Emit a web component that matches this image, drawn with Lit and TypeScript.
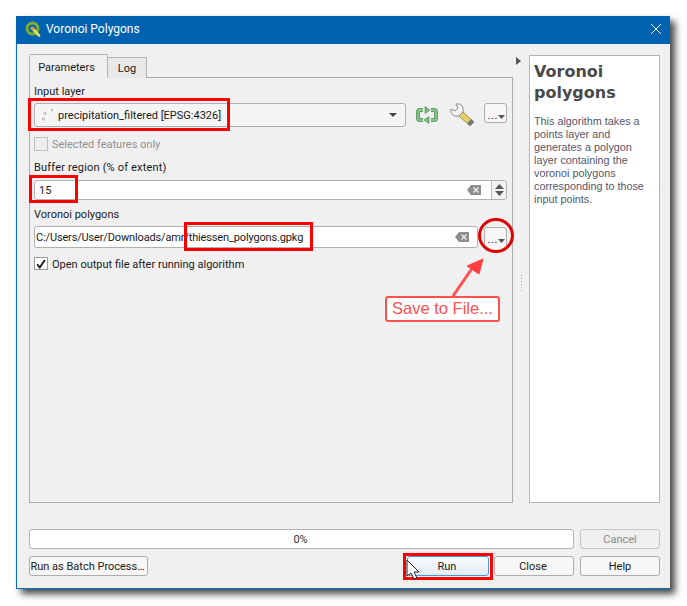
import { LitElement, html, css } from "lit";
import { customElement } from "lit/decorators.js";

const dots = html`<span class="dotsbtn-glyph"><i>...</i><svg width="7" height="4" viewBox="0 0 7 4"><path d="M0 0h7L3.500 4z" fill="#555"/></svg></span>`;
const clear = html`<svg class="clear" width="14" height="10" viewBox="0 0 14 10"><path d="M4 0h10v10H4L0 5z" fill="#8e8e8e"/><path d="M6.500 2.500l5 5M11.500 2.500l-5 5" stroke="#eee" stroke-width="1.400"/></svg>`;

@customElement("app-root")
export class AppRoot extends LitElement {
  static styles = css`
    :host { display: block; position: relative; width: 687px; height: 606px; background: #fff; overflow: hidden;
      font-family: Roboto, "Noto Sans", sans-serif; font-size: 11px; color: #1a1a1a; white-space: nowrap; }
    * { box-sizing: border-box; }
    .page { padding: 16px 17px 17px 16px; height: 100%; }
    .win { width: 654px; height: 573px; display: flex; flex-direction: column; background: #f0f0f0;
      border: 1px solid #0a6cbc; border-top: 0; border-right: 0; box-shadow: 5px 5px 7px rgba(0,0,0,.72); }
    .title { height: 28px; flex: none; margin-left: -1px; background: #0063b1; color: #fff; display: flex; align-items: center;
      padding: 0 8px 2px 9px; gap: 5px; font-size: 12px; }
    .title .t { flex: 1; }
    .body { flex: 1; display: flex; flex-direction: column; padding: 11px 10px 12px 12px; }
    .top { display: flex; height: 448px; flex: none; }
    .left { width: 484px; display: flex; flex-direction: column; }
    .tabs { display: flex; align-items: flex-end; height: 23px; flex: none; position: relative; z-index: 1; margin-bottom: -1px; }
    .tab { border: 1px solid #b4b4b4; border-bottom: 0; border-radius: 2px 2px 0 0; display: flex; align-items: center; justify-content: center; }
    .tab.on { width: 79px; height: 24px; background: #f0f0f0; padding: 2px 4px 0 0; }
    .tab.off { width: 40px; height: 21px; margin-left: -1px; background: #e8e8e8; padding-top: 1px; }
    .panel { flex: 1; border: 1px solid #ababab; padding: 4px 5px 0 4px; display: flex; flex-direction: column; }
    .lab { height: 16px; line-height: 18px; }
    .lab.l1 { margin-top: 1px; }
    .lab.buf { letter-spacing: .18px; }
    .row { display: flex; align-items: flex-start; }
    .combo { width: 372px; height: 24px; background: #f5f5f5; border: 1px solid #b0b0b0; border-radius: 3px; display: flex; align-items: center; padding: 0 8px 0 6px; margin-top: 4px; }
    .combo .pts { margin-right: 5px; flex: none; }
    .combo .name { flex: 1; padding-top: 1px; }
    .ic { display: flex; align-items: center; justify-content: center; flex: none; margin-top: 4px; }
    .ic1 { width: 34px; margin-left: 4px; height: 24px; }
    .ic2 { width: 36px; height: 24px; }
    .dotsbtn { width: 23px; height: 20px; border: 1px solid #adadad; border-radius: 3px; background: #f6f6f6; flex: none; margin: 4px 0 0 4px; position: relative; }
    .dotsbtn-glyph { position: absolute; right: 1px; top: 8px; display: flex; align-items: flex-end; color: #222; }
    .dotsbtn-glyph i { font-style: normal; font-size: 11px; line-height: 7px; letter-spacing: .6px; }
    .check { display: flex; align-items: center; gap: 4px; height: 14px; line-height: 16px; }
    .check .tx { padding-top: 2px; }
    .box { width: 14px; height: 14px; border: 1px solid #999; background: #fff; display: flex; align-items: center; justify-content: center; flex: none; }
    .check.dis { color: #909090; margin-top: 10px; }
    .check.dis .box { background: #eee; border-color: #c0c0c0; }
    .check.en { margin-top: 9px; height: 13px; }
    .check.en .box { height: 13px; }
    .buf { margin-top: 8px; }
    .spin { height: 20px; width: 473px; background: #fff; border: 1px solid #b0b0b0; border-radius: 3px; display: flex; align-items: center; padding-left: 4px; margin-top: 5px; }
    .spin .v { flex: 1; }
    .spin .clear { margin-right: 10px; }
    .arrows { width: 15px; height: 100%; border-left: 1px solid #b8b8b8; display: flex; flex-direction: column; align-items: center; justify-content: center; gap: 2px; background: #f2f2f2; border-radius: 0 3px 3px 0; }
    .vor { margin-top: 6px; }
    .out { width: 444px; height: 22px; background: #fff; border: 1px solid #b0b0b0; border-radius: 3px; display: flex; align-items: center; padding-left: 1px; }
    .out .v { flex: 1; letter-spacing: -.15px; }
    .out .clear { margin-right: 8px; }
    .outrow { margin-top: 4px; gap: 6px; height: 22px; }
    .outrow .dotsbtn { margin: 1px 0 0 0; height: 24px; }
    .split { width: 16px; flex: none; position: relative; }
    .arrow-r { position: absolute; left: 3px; top: 2px; }
    .grip { position: absolute; left: 8px; top: 220px; width: 1px; height: 16px; background-image: linear-gradient(#aaa 1px, transparent 1px); background-size: 1px 3px; }
    .help { width: 131px; flex: none; background: #fff; border: 1px solid #b4b4b4; padding: 5px 4px 0 4px; color: #55556a; font-family: "Liberation Sans", sans-serif; font-size: 10.800px; line-height: 13px; white-space: normal; }
    .help h3 { margin: 0 0 12px; font-size: 16px; line-height: 21px; color: #4a4a4a; font-weight: 700; font-family: "DejaVu Sans", sans-serif; }
    .help p { margin: 0; }
    .prog { display: flex; gap: 6px; margin-top: 26px; height: 20px; flex: none; }
    .bar { flex: 1; background: #fff; border: 1px solid #b4b4b4; border-radius: 3px; display: flex; align-items: center; justify-content: center; color: #333; padding-right: 2px; }
    .btn { width: 80px; height: 20px; border: 1px solid #adadad; border-radius: 3px; background: #f7f7f7; display: flex; align-items: center; justify-content: center; flex: none; padding-right: 2px; }
    .btn.dis { color: #8a8a8a; background: #efefef; border-color: #c4c4c4; padding-right: 0; }
    .btn.batch { width: 119px; }
    .btn.run { width: 82px; border-color: #3f9ae0; background: linear-gradient(#fbfcfe, #e2ebf3); }
    .btns { display: flex; margin-top: 7px; height: 20px; flex: none; gap: 5px; }
    .sp { flex: 1; }
    .btns .btn.help-b { margin-left: 1px; padding-right: 0; }
    .rect { position: absolute; border: 3px solid #f00; pointer-events: none; }
    .r1 { left: 28px; top: 98px; width: 202px; height: 33px; }
    .r2 { left: 29px; top: 175px; width: 49px; height: 28px; }
    .r3 { left: 184px; top: 222px; width: 129px; height: 29px; }
    .r4 { left: 403px; top: 553px; width: 90px; height: 27px; }
    .ring { position: absolute; left: 478px; top: 218px; width: 36px; height: 35px; border: 3px solid #e00000; border-radius: 50%; }
    .callout { position: absolute; left: 385px; top: 296px; width: 115px; height: 26px; background: #fff; border: 2px solid #ff5050; border-radius: 3px; color: #ff5050; font-family: "Liberation Sans", sans-serif; font-size: 16.500px; display: flex; align-items: center; justify-content: center; padding-bottom: 2px; }
    .over { position: absolute; left: 0; top: 0; pointer-events: none; }
  `;

  render() {
    return html`
      <div class="page"><div class="win">
        <div class="title">
          <svg width="16" height="16" viewBox="0 0 16 16">
            <circle cx="7.500" cy="7.500" r="5.400" fill="none" stroke="#7fae2e" stroke-width="3"/>
            <path d="M8 8l6 6.500" stroke="#dfe060" stroke-width="2.600" stroke-linecap="round"/>
            <circle cx="7.500" cy="7.500" r="2" fill="#e8923a"/>
          </svg>
          <span class="t">Voronoi Polygons</span>
          <svg width="12" height="12" viewBox="0 0 12 12"><path d="M1 1l10 10M11 1L1 11" stroke="#fff" stroke-width="1"/></svg>
        </div>
        <div class="body">
          <div class="top">
            <div class="left">
              <div class="tabs"><div class="tab on">Parameters</div><div class="tab off">Log</div></div>
              <div class="panel">
                <div class="lab l1">Input layer</div>
                <div class="row">
                  <div class="combo">
                    <svg class="pts" width="12" height="12" viewBox="0 0 12 12"><g fill="#fff" stroke="#a0a0a0" stroke-width=".8"><circle cx="2.500" cy="10" r="1.100"/><circle cx="4" cy="4.500" r="1.100"/><circle cx="11" cy="1" r="1"/></g></svg>
                    <span class="name">precipitation_filtered [EPSG:4326]</span>
                    <svg width="8" height="4" viewBox="0 0 8 4"><path d="M0 0h8L4 4z" fill="#444"/></svg>
                  </div>
                  <div class="ic ic1">
                    <svg width="22" height="18" viewBox="0 0 22 18">
                      <g fill="none" stroke-linejoin="round">
                        <path d="M7 4H4Q2 4 2 6v6q0 2 2 2h3M15 14h3q2 0 2-2V6q0-2-2-2h-3" stroke="#5f9f66" stroke-width="4"/>
                        <path d="M7 4H4Q2 4 2 6v6q0 2 2 2h3M15 14h3q2 0 2-2V6q0-2-2-2h-3" stroke="#8cc48e" stroke-width="1.800"/>
                      </g>
                      <path d="M9 .5l5 3.500-5 3.500zM13 10.500l-5 3.500 5 3.500z" fill="#7cb880" stroke="#5f9f66" stroke-width=".8" stroke-linejoin="round"/>
                    </svg>
                  </div>
                  <div class="ic ic2">
                    <svg width="25" height="24" viewBox="0 0 25 24">
                      <path d="M13 9l11 10-4 4L9 13z" fill="#e6cf68" stroke="#8a8450" stroke-width=".8"/>
                      <path d="M21 16.300l3 2.700-4 4-2.800-3z" fill="#777"/>
                      <path d="M6 1L8 5 5 8 1 6C0 11 4 14 9 13L13 9C14 4 11 0 6 1z" fill="#f4f4f4" stroke="#8a8a8a" stroke-width="1" stroke-linejoin="round"/>
                    </svg>
                  </div>
                  <div class="dotsbtn">${dots}</div>
                </div>
                <div class="check dis"><span class="box"></span><span class="tx">Selected features only</span></div>
                <div class="lab buf">Buffer region (% of extent)</div>
                <div class="spin">
                  <span class="v">15</span>${clear}
                  <span class="arrows">
                    <svg width="9" height="5" viewBox="0 0 9 5"><path d="M4.500 0L9 5H0z" fill="#555"/></svg>
                    <svg width="9" height="5" viewBox="0 0 9 5"><path d="M4.500 5L9 0H0z" fill="#555"/></svg>
                  </span>
                </div>
                <div class="lab vor">Voronoi polygons</div>
                <div class="row outrow">
                  <div class="out"><span class="v">C:/Users/User/Downloads/amr/thiessen_polygons.gpkg</span>${clear}</div>
                  <div class="dotsbtn">${dots}</div>
                </div>
                <div class="check en"><span class="box"><svg width="10" height="10" viewBox="0 0 10 10"><path d="M1.200 5.200L3.800 8.500 8.800 1" fill="none" stroke="#111" stroke-width="1.800"/></svg></span><span class="tx">Open output file after running algorithm</span></div>
              </div>
            </div>
            <div class="split">
              <svg class="arrow-r" width="5" height="8" viewBox="0 0 5 8"><path d="M0 0l5 4-5 4z" fill="#555"/></svg>
              <div class="grip"></div>
            </div>
            <div class="help">
              <h3>Voronoi polygons</h3>
              <p>This algorithm takes a points layer and generates a polygon layer containing the voronoi polygons corresponding to those input points.</p>
            </div>
          </div>
          <div class="prog"><div class="bar">0%</div><div class="btn dis">Cancel</div></div>
          <div class="btns">
            <div class="btn batch">Run as Batch Process…</div>
            <div class="sp"></div>
            <div class="btn run">Run</div>
            <div class="btn">Close</div>
            <div class="btn help-b">Help</div>
          </div>
        </div>
      </div></div>

      <div class="rect r1"></div>
      <div class="rect r2"></div>
      <div class="rect r3"></div>
      <div class="rect r4"></div>
      <div class="ring"></div>
      <svg class="over" width="687" height="606" viewBox="0 0 687 606">
        <path d="M453 296L473 267" stroke="#ff5050" stroke-width="3"/>
        <path d="M483 259L467 266L479 274z" fill="#ff4040" stroke="#ff4040" stroke-linejoin="round"/>
        <path d="M407 560v16l4-3 3 6 3-1-3-6h5z" fill="#fff" stroke="#222" stroke-width="1"/>
      </svg>
      <div class="callout">Save to File...</div>
    `;
  }
}
